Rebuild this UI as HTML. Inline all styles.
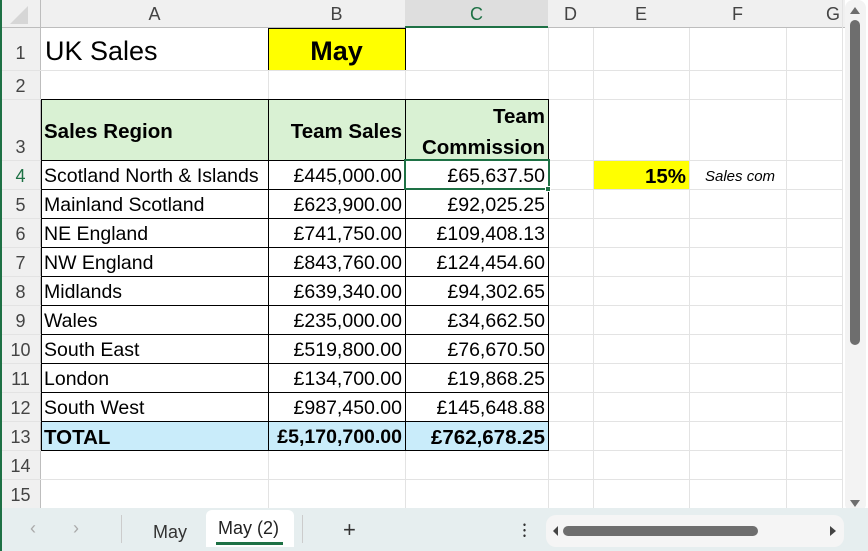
<!DOCTYPE html><html><head><style>
body{margin:0;width:868px;height:551px;overflow:hidden;background:#fff;font-family:"Liberation Sans",sans-serif;position:relative}
div{position:absolute;box-sizing:border-box}
.vl{top:28px;width:1px;height:480px;background:#e3e3e3}
.hl{left:0;height:1px;width:842px;background:#e3e3e3}
.rh{left:0;width:41px;text-align:center;color:#444;font-size:18px}
.ch{top:0;height:28px;line-height:28px;text-align:center;color:#444;font-size:18px}
.c{font-size:19.5px;line-height:29px;height:29px;white-space:nowrap;color:#000;padding:0 3px}
.r{text-align:right}
.b{font-weight:bold;font-size:20.5px}
</style></head><body>
<div style="left:0;top:0;width:845px;height:28px;background:#f0f0f0;border-bottom:1px solid #bdbdbd"></div>
<div style="left:405px;top:0;width:143px;height:28px;background:#dedede;border-bottom:2px solid #1e7145"></div>
<div style="left:0;top:28px;width:41px;height:480px;background:#f0f0f0;border-right:1px solid #bdbdbd"></div>
<div style="left:0;top:0;width:41px;height:28px;border-right:1px solid #bdbdbd"></div>
<div style="left:10px;top:6px;width:0;height:0;border-left:18px solid transparent;border-bottom:18px solid #d6d6d6"></div>
<div class="ch" style="left:41px;width:227px">A</div>
<div class="ch" style="left:268px;width:137px">B</div>
<div class="ch" style="left:405px;width:143px;color:#1e7145">C</div>
<div class="ch" style="left:548px;width:45px">D</div>
<div class="ch" style="left:593px;width:96px">E</div>
<div class="ch" style="left:689px;width:97px">F</div>
<div class="ch" style="left:786px;width:56px;text-align:right;padding-right:2px">G</div>
<div style="left:268px;top:28px;width:138px;height:43px;background:#ff0;border:1px solid #000"></div>
<div style="left:41px;top:99px;width:507px;height:61px;background:#d9f1d3"></div>
<div style="left:41px;top:421px;width:507px;height:29px;background:#c9ecfa"></div>
<div style="left:593px;top:160px;width:97px;height:30px;background:#ff0;border:1px solid #000"></div>
<div class="vl" style="left:548px"></div><div class="vl" style="left:593px"></div><div class="vl" style="left:689px"></div><div class="vl" style="left:786px"></div><div class="vl" style="left:842px;top:0;height:508px"></div>
<div class="hl" style="top:70px"></div><div class="hl" style="top:99px"></div><div class="hl" style="top:160px"></div><div class="hl" style="top:189px"></div><div class="hl" style="top:218px"></div><div class="hl" style="top:247px"></div><div class="hl" style="top:276px"></div><div class="hl" style="top:305px"></div><div class="hl" style="top:334px"></div><div class="hl" style="top:363px"></div><div class="hl" style="top:392px"></div><div class="hl" style="top:421px"></div><div class="hl" style="top:450px"></div><div class="hl" style="top:479px"></div>
<div class="vl" style="left:268px;top:70px;height:29px"></div><div class="vl" style="left:405px;top:70px;height:29px"></div>
<div class="vl" style="left:268px;top:450px;height:58px"></div><div class="vl" style="left:405px;top:450px;height:58px"></div>
<div style="left:41px;top:99px;width:508px;height:352px;border:1px solid #000"></div>
<div style="left:268px;top:99px;width:1px;height:352px;background:#000"></div>
<div style="left:405px;top:99px;width:1px;height:352px;background:#000"></div>
<div style="left:41px;top:160px;width:507px;height:1px;background:#000"></div>
<div style="left:41px;top:189px;width:507px;height:1px;background:#000"></div>
<div style="left:41px;top:218px;width:507px;height:1px;background:#000"></div>
<div style="left:41px;top:247px;width:507px;height:1px;background:#000"></div>
<div style="left:41px;top:276px;width:507px;height:1px;background:#000"></div>
<div style="left:41px;top:305px;width:507px;height:1px;background:#000"></div>
<div style="left:41px;top:334px;width:507px;height:1px;background:#000"></div>
<div style="left:41px;top:363px;width:507px;height:1px;background:#000"></div>
<div style="left:41px;top:392px;width:507px;height:1px;background:#000"></div>
<div style="left:41px;top:421px;width:507px;height:1px;background:#000"></div>
<div style="left:404px;top:159px;width:146px;height:31px;border:2px solid #1e7145"></div>
<div style="left:545px;top:186px;width:6px;height:6px;background:#1e7145;border:1px solid #fff"></div>
<div class="rh" style="top:28px;height:42px;line-height:50px">1</div>
<div class="rh" style="top:70px;height:29px;line-height:32px">2</div>
<div class="rh" style="top:99px;height:61px;line-height:96px">3</div>
<div class="rh" style="top:160px;line-height:32px;color:#1e7145">4</div>
<div class="rh" style="top:189px;line-height:32px">5</div><div class="rh" style="top:218px;line-height:32px">6</div><div class="rh" style="top:247px;line-height:32px">7</div><div class="rh" style="top:276px;line-height:32px">8</div><div class="rh" style="top:305px;line-height:32px">9</div><div class="rh" style="top:334px;line-height:32px">10</div><div class="rh" style="top:363px;line-height:32px">11</div><div class="rh" style="top:392px;line-height:32px">12</div><div class="rh" style="top:421px;line-height:32px">13</div><div class="rh" style="top:450px;line-height:32px">14</div><div class="rh" style="top:479px;line-height:32px">15</div>
<div class="c" style="left:42px;top:34px;font-size:27px;line-height:34px;height:34px">UK Sales</div>
<div class="c b" style="left:268px;top:34px;width:137px;text-align:center;font-size:27px;line-height:34px;height:34px">May</div>
<div class="c b" style="left:41px;top:117px">Sales Region</div>
<div class="c b r" style="left:268px;top:117px;width:137px">Team Sales</div>
<div class="c b r" style="left:405px;top:102px;width:143px">Team</div>
<div class="c b r" style="left:405px;top:133px;width:143px">Commission</div>
<div class="c b r" style="left:593px;top:162px;width:96px">15%</div>
<div class="c" style="left:702px;top:162px;font-size:15px;font-style:italic">Sales com</div>
<div class="c" style="left:41px;top:162px">Scotland North &amp; Islands</div><div class="c r" style="left:268px;top:162px;width:137px">£445,000.00</div><div class="c r" style="left:405px;top:162px;width:143px">£65,637.50</div>
<div class="c" style="left:41px;top:191px">Mainland Scotland</div><div class="c r" style="left:268px;top:191px;width:137px">£623,900.00</div><div class="c r" style="left:405px;top:191px;width:143px">£92,025.25</div>
<div class="c" style="left:41px;top:220px">NE England</div><div class="c r" style="left:268px;top:220px;width:137px">£741,750.00</div><div class="c r" style="left:405px;top:220px;width:143px">£109,408.13</div>
<div class="c" style="left:41px;top:249px">NW England</div><div class="c r" style="left:268px;top:249px;width:137px">£843,760.00</div><div class="c r" style="left:405px;top:249px;width:143px">£124,454.60</div>
<div class="c" style="left:41px;top:278px">Midlands</div><div class="c r" style="left:268px;top:278px;width:137px">£639,340.00</div><div class="c r" style="left:405px;top:278px;width:143px">£94,302.65</div>
<div class="c" style="left:41px;top:307px">Wales</div><div class="c r" style="left:268px;top:307px;width:137px">£235,000.00</div><div class="c r" style="left:405px;top:307px;width:143px">£34,662.50</div>
<div class="c" style="left:41px;top:336px">South East</div><div class="c r" style="left:268px;top:336px;width:137px">£519,800.00</div><div class="c r" style="left:405px;top:336px;width:143px">£76,670.50</div>
<div class="c" style="left:41px;top:365px">London</div><div class="c r" style="left:268px;top:365px;width:137px">£134,700.00</div><div class="c r" style="left:405px;top:365px;width:143px">£19,868.25</div>
<div class="c" style="left:41px;top:394px">South West</div><div class="c r" style="left:268px;top:394px;width:137px">£987,450.00</div><div class="c r" style="left:405px;top:394px;width:143px">£145,648.88</div>
<div class="c b" style="left:41px;top:423px">TOTAL</div><div class="c b r" style="left:268px;top:423px;width:137px;font-size:19.5px">£5,170,700.00</div><div class="c b r" style="left:405px;top:423px;width:143px">£762,678.25</div>
<div style="left:845px;top:0;width:21px;height:512px;background:#f3f3f3;border-radius:8px"></div>
<div style="left:850px;top:20px;width:10px;height:325px;background:#6e6e6e;border-radius:5px"></div>
<div style="left:850px;top:7px;width:0;height:0;border-left:5px solid transparent;border-right:5px solid transparent;border-bottom:7px solid #6e6e6e"></div>
<div style="left:850px;top:500px;width:0;height:0;border-left:5px solid transparent;border-right:5px solid transparent;border-top:7px solid #6e6e6e"></div>
<div style="left:0;top:508px;width:868px;height:43px;background:#e6eeef"></div>
<div style="left:0;top:0;width:2px;height:551px;background:#1e7145"></div>
<div style="left:30px;top:518px;color:#aaa;font-size:18px">‹</div>
<div style="left:73px;top:518px;color:#aaa;font-size:18px">›</div>
<div style="left:153px;top:522px;font-size:18px;color:#333">May</div>
<div style="left:121px;top:515px;width:1px;height:28px;background:#ccc"></div>
<div style="left:206px;top:510px;width:88px;height:37px;background:#fff;border-radius:6px 6px 0 0"></div>
<div style="left:218px;top:518px;font-size:18px;color:#222">May (2)</div>
<div style="left:216px;top:542px;width:67px;height:3px;background:#1e7145"></div>
<div style="left:302px;top:515px;width:1px;height:28px;background:#ccc"></div>
<div style="left:343px;top:517px;font-size:22px;color:#333">+</div>
<div style="left:523px;top:522px;width:3px;height:16px;background:radial-gradient(circle,#333 1.2px,transparent 1.3px) 0 0/3px 5.5px"></div>
<div style="left:546px;top:515px;width:298px;height:32px;background:#f5f5f5;border-radius:10px"></div>
<div style="left:553px;top:526px;width:0;height:0;border-top:5px solid transparent;border-bottom:5px solid transparent;border-right:5px solid #444"></div>
<div style="left:563px;top:526px;width:195px;height:10px;background:#6e6e6e;border-radius:5px"></div>
<div style="left:830px;top:526px;width:0;height:0;border-top:5px solid transparent;border-bottom:5px solid transparent;border-left:6px solid #444"></div>
</body></html>
